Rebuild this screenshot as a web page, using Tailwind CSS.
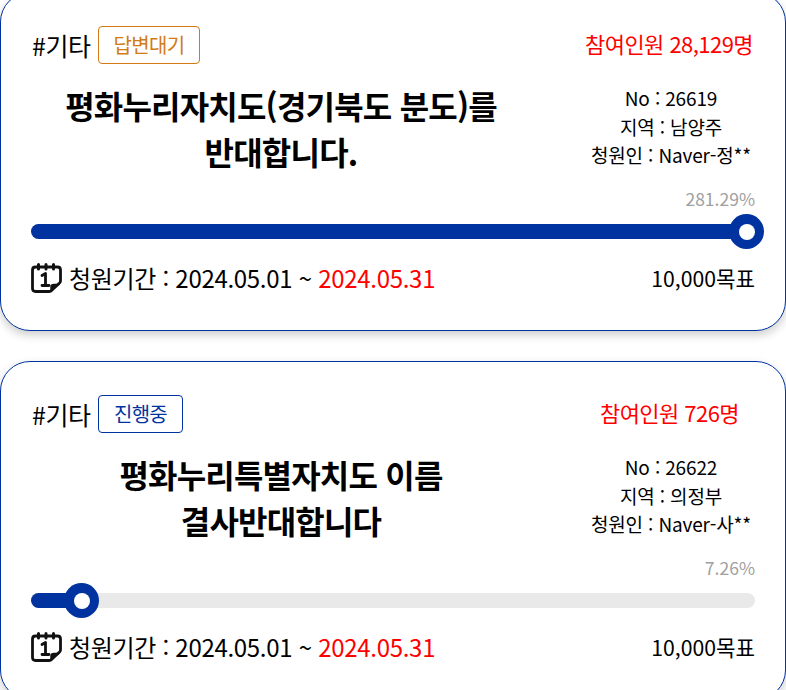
<!DOCTYPE html>
<html lang="ko">
<head>
<meta charset="utf-8">
<script src="https://cdn.jsdelivr.net/npm/@tailwindcss/browser@4"></script>
</head>
<body class="bg-white font-['Noto_Sans_CJK_KR','Noto_Sans',sans-serif] text-black overflow-hidden">
<div class="w-[786px] h-[690px] overflow-hidden">
<div class="-mt-[8px] flex flex-col gap-[30px]">

<section class="h-[339px] rounded-[30px] border border-[#0033a0] bg-white shadow-[0_4px_10px_rgba(0,0,0,0.2)] pl-[30px] pr-[30px] pt-[33px]">
  <div class="flex h-[38px] items-center justify-between">
    <div class="flex items-center gap-[8px]">
      <span class="ml-[1px] -mt-[1px] w-[58px] whitespace-nowrap text-[25px] leading-[38px] tracking-[-0.4px]">#기타</span>
      <span class="flex h-[38px] w-[102px] items-center justify-center rounded-[4px] border border-[#d37a14] pb-[1px] text-[20px] tracking-[-0.7px] text-[#d37a14]">답변대기</span>
    </div>
    <span class="mr-[2px] -mt-[4px] text-[22px] tracking-[-0.55px] text-[#ff0000]">참여인원 28,129명</span>
  </div>
  <div class="mt-[20px] flex h-[103px]">
    <h2 class="-mt-[2px] w-[500px] shrink-0 text-center text-[32px] font-bold leading-[46px] tracking-[-0.8px]">평화누리자치도(경기북도 분도)를<br>반대합니다.</h2>
    <div class="flex-1 whitespace-nowrap pl-[56px] text-center text-[19px] leading-[28.5px] tracking-[-0.15px]">No : 26619<br>지역 : 남양주<br>청원인 : Naver-정**</div>
  </div>
  <div class="text-right text-[17.5px] leading-[24px] text-[#a0a0a0]">281.29%</div>
  <div class="relative mt-[13px] h-[15px] rounded-full bg-[#e9e9e9]">
    <div class="h-full w-full rounded-full bg-[#0033a0]"></div>
    <div class="absolute left-[698px] top-[-10px] flex h-[35px] w-[35px] items-center justify-center rounded-full bg-[#0033a0]"><div class="h-[16px] w-[16px] rounded-full bg-white"></div></div>
  </div>
  <div class="mt-[20px] flex items-center justify-between text-[24px] leading-[38px] tracking-[-0.3px]">
    <div class="flex items-center gap-[7px]">
      <svg class="h-[30px] w-[31px]" viewBox="0 0 31 30" fill="none" stroke="#111" stroke-width="2.800" stroke-linejoin="round" stroke-linecap="round"><path d="M18 28.500H4.500Q1.500 28.500 1.500 25.500V7Q1.500 4 4.500 4H26.500Q29.500 4 29.500 7V18Q29.500 19 28.500 20L20 28Q19 28.500 18 28.500Z"/><path d="M7.500 1.500V6M15 1.500V6M22.500 1.500V6" stroke-width="3"/><path d="M11 12.500L14.500 10.500V22.500M11 22.500H18" stroke-width="2.800"/><path d="M20 27V24Q20 21.500 23 21.500H28Z" fill="#111" stroke="#111" stroke-width="1.500"/></svg>
      <span>청원기간 : 2024.05.01 ~ <span class="text-[#ff0000]">2024.05.31</span></span>
    </div>
    <span class="-mt-[1px] text-[21.2px] tracking-normal">10,000목표</span>
  </div>
</section>

<section class="h-[339px] rounded-[30px] border border-[#0033a0] bg-white shadow-[0_4px_10px_rgba(0,0,0,0.2)] pl-[30px] pr-[30px] pt-[33px]">
  <div class="flex h-[38px] items-center justify-between">
    <div class="flex items-center gap-[8px]">
      <span class="ml-[1px] -mt-[1px] w-[58px] whitespace-nowrap text-[25px] leading-[38px] tracking-[-0.4px]">#기타</span>
      <span class="flex h-[38px] w-[85px] items-center justify-center rounded-[4px] border border-[#0033a0] pb-[1px] text-[20px] tracking-[-0.7px] text-[#0033a0]">진행중</span>
    </div>
    <span class="mr-[16px] -mt-[4px] text-[22px] tracking-[-0.55px] text-[#ff0000]">참여인원 726명</span>
  </div>
  <div class="mt-[20px] flex h-[103px]">
    <h2 class="-mt-[2px] w-[500px] shrink-0 text-center text-[32px] font-bold leading-[46px] tracking-[-0.8px]">평화누리특별자치도 이름<br>결사반대합니다</h2>
    <div class="flex-1 whitespace-nowrap pl-[56px] text-center text-[19px] leading-[28.5px] tracking-[-0.15px]">No : 26622<br>지역 : 의정부<br>청원인 : Naver-사**</div>
  </div>
  <div class="text-right text-[17.5px] leading-[24px] text-[#a0a0a0]">7.26%</div>
  <div class="relative mt-[13px] h-[15px] rounded-full bg-[#e9e9e9]">
    <div class="h-full w-[7.26%] rounded-full bg-[#0033a0]"></div>
    <div class="absolute left-[33px] top-[-10px] flex h-[35px] w-[35px] items-center justify-center rounded-full bg-[#0033a0]"><div class="h-[16px] w-[16px] rounded-full bg-white"></div></div>
  </div>
  <div class="mt-[20px] flex items-center justify-between text-[24px] leading-[38px] tracking-[-0.3px]">
    <div class="flex items-center gap-[7px]">
      <svg class="h-[30px] w-[31px]" viewBox="0 0 31 30" fill="none" stroke="#111" stroke-width="2.800" stroke-linejoin="round" stroke-linecap="round"><path d="M18 28.500H4.500Q1.500 28.500 1.500 25.500V7Q1.500 4 4.500 4H26.500Q29.500 4 29.500 7V18Q29.500 19 28.500 20L20 28Q19 28.500 18 28.500Z"/><path d="M7.500 1.500V6M15 1.500V6M22.500 1.500V6" stroke-width="3"/><path d="M11 12.500L14.500 10.500V22.500M11 22.500H18" stroke-width="2.800"/><path d="M20 27V24Q20 21.500 23 21.500H28Z" fill="#111" stroke="#111" stroke-width="1.500"/></svg>
      <span>청원기간 : 2024.05.01 ~ <span class="text-[#ff0000]">2024.05.31</span></span>
    </div>
    <span class="-mt-[1px] text-[21.2px] tracking-normal">10,000목표</span>
  </div>
</section>

</div>
</div>
</body>
</html>
